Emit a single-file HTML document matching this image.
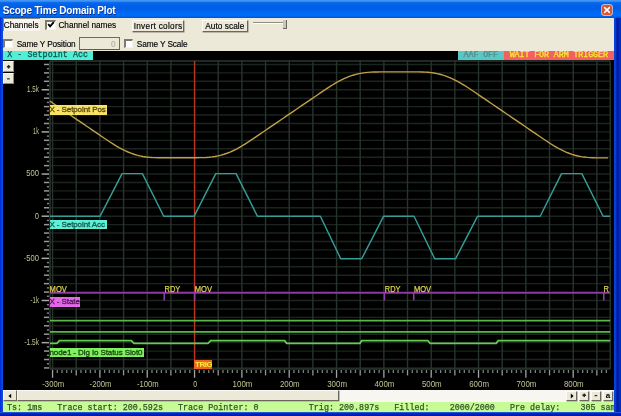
<!DOCTYPE html>
<html><head><meta charset="utf-8"><title>Scope Time Domain Plot</title>
<style>
html,body{margin:0;padding:0;}
body{width:621px;height:416px;overflow:hidden;background:#0a31c4;font-family:"Liberation Sans",sans-serif;position:relative;}
.abs{position:absolute;}
#wrap{position:absolute;left:0;top:0;width:621px;height:416px;will-change:transform;filter:blur(0.4px);}
#title{left:0;top:0;width:621px;height:18px;background:linear-gradient(#4c9ef4 0px,#3088f2 1.5px,#0a68ee 2.6px,#0060e8 5px,#005ee6 9px,#0068f2 12px,#006cf8 14.5px,#0068f4 16.2px,#0056e0 17px,#0050d8 18px);}
#title span{position:absolute;left:2.8px;top:5.3px;font-size:10px;font-weight:bold;color:#fff;letter-spacing:-0.2px;white-space:nowrap;text-shadow:0.5px 0.5px 0 #0a2a80;}
#close{left:602px;top:5px;width:10px;height:10px;border-radius:2px;background:#d8532f;box-shadow:0 0 0 0.7px #f4d8cc;}
#tool{left:3px;top:17.6px;width:611.2px;height:33.8px;background:#ece9d8;}
#tb span, #tb div{-webkit-text-stroke:0.15px currentColor;font-size:8.25px;color:#000;white-space:nowrap;}
.chk{position:absolute;width:9px;height:9px;background:#fff;border:1px solid;border-width:2px 1px 1px 2px;border-color:#7c7a6e #f6f4ec #f6f4ec #7c7a6e;box-sizing:border-box;}
.btn{position:absolute;height:12.5px;box-sizing:border-box;border:1px solid;border-color:#fbfaf6 #6a685e #6a685e #fbfaf6;background:#ece9d8;text-align:center;line-height:10.6px;box-shadow:0.6px 0.6px 0 #9a988c;}
#plot{left:3px;top:51px;width:611.2px;height:339.5px;background:#000;}
#sb{left:3px;top:390.4px;width:611.4px;height:11.3px;background:#f7f6f0;}
#status{left:3px;top:401.7px;width:611.4px;height:10px;background:#c6fb96;font-family:"Liberation Mono",monospace;font-size:9.4px;color:#2c5226;white-space:pre;overflow:hidden;line-height:12px;}
#status span{-webkit-text-stroke:0.25px currentColor;position:relative;left:-0.7px;display:inline-block;transform:scaleX(0.894);transform-origin:0 0;}
.sb2{border-color:#fbfaf6 #8e8c80 #8e8c80 #fbfaf6;box-shadow:none;}
.lab{-webkit-text-stroke:0.3px currentColor;position:absolute;font-size:8px;letter-spacing:-0.1px;line-height:9.6px;height:9.6px;white-space:nowrap;overflow:hidden;color:#203020;}
.mono{font-family:"Liberation Mono",monospace;}
</style></head><body><div id="wrap">
<div class="abs" style="left:0;top:0;width:3.2px;height:416px;background:linear-gradient(90deg,#0026d8 0,#0a4ce2 2px,#0a48cc 3.2px);"></div>
<div class="abs" style="left:613.6px;top:0;width:7.4px;height:416px;background:linear-gradient(90deg,#0a44dc 0,#0a3cd4 1.6px,#001ea8 2.8px,#0020a8 4.8px,#0030d0 5.8px,#002cc0 6.4px,#00249c 7.4px);"></div>
<div class="abs" style="left:0;top:411.6px;width:621px;height:4.4px;background:linear-gradient(#3a70e0 0,#0028d0 1.2px,#0020b8 2.4px,#001898 4.4px);"></div>
<div id="title" class="abs"><span>Scope Time Domain Plot</span>
<div id="close" class="abs"><svg width="10" height="10" viewBox="0 0 10 10" style="position:absolute;left:0;top:0"><path d="M2.6 2.6 L7.4 7.4 M7.4 2.6 L2.6 7.4" stroke="#fff" stroke-width="1.5" stroke-linecap="round"/></svg></div>
</div>
<div id="tool" class="abs"></div>
<div id="tb">
  <div class="abs" style="left:3px;top:18.2px;width:37.4px;height:13px;background:#f7f5ee;border-left:0.8px solid #8a897e;border-top:0.8px solid #8a897e;box-sizing:border-box;"></div>
  <span class="abs" style="left:3.7px;top:20.6px;">Channels</span>
  <div class="chk" style="left:45.2px;top:19.9px;width:10.4px;height:9.8px;"></div>
  <svg class="abs" style="left:46.6px;top:21.4px" width="8" height="8" viewBox="0 0 8 8"><path d="M1.2 3.2 L3.1 5.4 L6.8 1.2" stroke="#000" stroke-width="1.9" fill="none"/></svg>
  <span class="abs" style="left:58.4px;top:20.6px;">Channel names</span>
  <div class="btn" style="left:131.8px;top:19.5px;width:52.5px;height:12.6px;letter-spacing:0.3px;line-height:12.2px;">Invert colors</div>
  <div class="btn" style="left:201.7px;top:19.5px;width:46.2px;height:12.6px;line-height:12.2px;letter-spacing:0.05px;">Auto scale</div>
  <div class="abs" style="left:252.5px;top:22px;width:31px;height:1px;background:#8d8c82;"></div>
  <div class="abs" style="left:252.5px;top:23px;width:31px;height:0.8px;background:#fff;"></div>
  <div class="abs" style="left:283.4px;top:20.4px;width:3.8px;height:8.4px;background:#c8c6b8;border-right:1px solid #6a695f;border-bottom:1px solid #6a695f;box-sizing:border-box;"></div>
  <div class="chk" style="left:3.4px;top:38.8px;width:9.6px;height:9.6px;"></div>
  <span class="abs" style="left:16.7px;top:39.7px;letter-spacing:-0.12px;">Same Y Position</span>
  <div class="abs" style="left:78.5px;top:36.6px;width:41.8px;height:13.6px;background:#ece9d8;border:1px solid #6e6c62;border-bottom:1.4px solid #5c5a52;box-sizing:border-box;"></div>
  <span class="abs" style="left:111px;top:39.7px;color:#b4b1a2;">0</span>
  <div class="chk" style="left:123.6px;top:38.8px;width:9.6px;height:9.6px;"></div>
  <span class="abs" style="left:136.8px;top:39.7px;letter-spacing:-0.1px;">Same Y Scale</span>
</div>
<div id="plot" class="abs"></div>
<svg class="abs" style="left:0;top:0" width="621" height="416" viewBox="0 0 621 416" font-family="Liberation Sans, sans-serif">
 <g stroke="#27342c" stroke-width="1.4"><line stroke="#1a251f" x1="50.0" x2="610.2" y1="367.94" y2="367.94"/>
<line stroke="#1a251f" x1="50.0" x2="610.2" y1="359.51" y2="359.51"/>
<line stroke="#1a251f" x1="50.0" x2="610.2" y1="351.08" y2="351.08"/>
<line stroke="#1a251f" x1="50.0" x2="610.2" y1="342.65" y2="342.65"/>
<line stroke="#1a251f" x1="50.0" x2="610.2" y1="334.22" y2="334.22"/>
<line stroke="#1a251f" x1="50.0" x2="610.2" y1="325.79" y2="325.79"/>
<line stroke="#1a251f" x1="50.0" x2="610.2" y1="317.36" y2="317.36"/>
<line stroke="#1a251f" x1="50.0" x2="610.2" y1="308.93" y2="308.93"/>
<line stroke="#1a251f" x1="50.0" x2="610.2" y1="300.50" y2="300.50"/>
<line stroke="#1a251f" x1="50.0" x2="610.2" y1="292.07" y2="292.07"/>
<line stroke="#1a251f" x1="50.0" x2="610.2" y1="283.64" y2="283.64"/>
<line stroke="#1a251f" x1="50.0" x2="610.2" y1="275.21" y2="275.21"/>
<line stroke="#1a251f" x1="50.0" x2="610.2" y1="266.78" y2="266.78"/>
<line stroke="#1a251f" x1="50.0" x2="610.2" y1="258.35" y2="258.35"/>
<line stroke="#1a251f" x1="50.0" x2="610.2" y1="249.92" y2="249.92"/>
<line stroke="#1a251f" x1="50.0" x2="610.2" y1="241.49" y2="241.49"/>
<line stroke="#1a251f" x1="50.0" x2="610.2" y1="233.06" y2="233.06"/>
<line stroke="#1a251f" x1="50.0" x2="610.2" y1="224.63" y2="224.63"/>
<line stroke="#1a251f" x1="50.0" x2="610.2" y1="216.20" y2="216.20"/>
<line stroke="#1a251f" x1="50.0" x2="610.2" y1="207.77" y2="207.77"/>
<line stroke="#1a251f" x1="50.0" x2="610.2" y1="199.34" y2="199.34"/>
<line stroke="#1a251f" x1="50.0" x2="610.2" y1="190.91" y2="190.91"/>
<line stroke="#1a251f" x1="50.0" x2="610.2" y1="182.48" y2="182.48"/>
<line stroke="#1a251f" x1="50.0" x2="610.2" y1="174.05" y2="174.05"/>
<line stroke="#1a251f" x1="50.0" x2="610.2" y1="165.62" y2="165.62"/>
<line stroke="#1a251f" x1="50.0" x2="610.2" y1="157.19" y2="157.19"/>
<line stroke="#1a251f" x1="50.0" x2="610.2" y1="148.76" y2="148.76"/>
<line stroke="#1a251f" x1="50.0" x2="610.2" y1="140.33" y2="140.33"/>
<line stroke="#1a251f" x1="50.0" x2="610.2" y1="131.90" y2="131.90"/>
<line stroke="#1a251f" x1="50.0" x2="610.2" y1="123.47" y2="123.47"/>
<line stroke="#1a251f" x1="50.0" x2="610.2" y1="115.04" y2="115.04"/>
<line stroke="#1a251f" x1="50.0" x2="610.2" y1="106.61" y2="106.61"/>
<line stroke="#1a251f" x1="50.0" x2="610.2" y1="98.18" y2="98.18"/>
<line stroke="#1a251f" x1="50.0" x2="610.2" y1="89.75" y2="89.75"/>
<line stroke="#1a251f" x1="50.0" x2="610.2" y1="81.32" y2="81.32"/>
<line stroke="#1a251f" x1="50.0" x2="610.2" y1="72.89" y2="72.89"/>
<line stroke="#1a251f" x1="50.0" x2="610.2" y1="64.46" y2="64.46"/>
<line x1="52.56" x2="52.56" y1="61.0" y2="369.3"/>
<line x1="76.23" x2="76.23" y1="61.0" y2="369.3"/>
<line x1="99.89" x2="99.89" y1="61.0" y2="369.3"/>
<line x1="123.56" x2="123.56" y1="61.0" y2="369.3"/>
<line x1="147.22" x2="147.22" y1="61.0" y2="369.3"/>
<line x1="170.89" x2="170.89" y1="61.0" y2="369.3"/>
<line x1="194.55" x2="194.55" y1="61.0" y2="369.3"/>
<line x1="218.22" x2="218.22" y1="61.0" y2="369.3"/>
<line x1="241.88" x2="241.88" y1="61.0" y2="369.3"/>
<line x1="265.55" x2="265.55" y1="61.0" y2="369.3"/>
<line x1="289.21" x2="289.21" y1="61.0" y2="369.3"/>
<line x1="312.88" x2="312.88" y1="61.0" y2="369.3"/>
<line x1="336.54" x2="336.54" y1="61.0" y2="369.3"/>
<line x1="360.21" x2="360.21" y1="61.0" y2="369.3"/>
<line x1="383.87" x2="383.87" y1="61.0" y2="369.3"/>
<line x1="407.53" x2="407.53" y1="61.0" y2="369.3"/>
<line x1="431.20" x2="431.20" y1="61.0" y2="369.3"/>
<line x1="454.87" x2="454.87" y1="61.0" y2="369.3"/>
<line x1="478.53" x2="478.53" y1="61.0" y2="369.3"/>
<line x1="502.19" x2="502.19" y1="61.0" y2="369.3"/>
<line x1="525.86" x2="525.86" y1="61.0" y2="369.3"/>
<line x1="549.52" x2="549.52" y1="61.0" y2="369.3"/>
<line x1="573.19" x2="573.19" y1="61.0" y2="369.3"/>
<line x1="596.86" x2="596.86" y1="61.0" y2="369.3"/></g>
 <line x1="50.0" x2="50.0" y1="61.0" y2="369.3" stroke="#2a3830" stroke-width="1.5"/>
 <line x1="610.2" x2="610.2" y1="61.0" y2="369.3" stroke="#27342c" stroke-width="1.4"/>
 <path d="M50.0,61 H610.2 M50.0,369 H610.2" stroke="#2a382f" stroke-width="1.4" fill="none"/>
 <g stroke="#9a9a9a" stroke-width="1.5"><line stroke="#989898" x1="44.0" x2="49" y1="367.94" y2="367.94"/>
<line stroke="#808080" x1="46.9" x2="49" y1="363.73" y2="363.73"/>
<line stroke="#989898" x1="44.0" x2="49" y1="359.51" y2="359.51"/>
<line stroke="#808080" x1="46.9" x2="49" y1="355.29" y2="355.29"/>
<line stroke="#989898" x1="44.0" x2="49" y1="351.08" y2="351.08"/>
<line stroke="#808080" x1="46.9" x2="49" y1="346.87" y2="346.87"/>
<line stroke="#a8a8a8" x1="41.6" x2="49" y1="342.65" y2="342.65"/>
<line stroke="#808080" x1="46.9" x2="49" y1="338.44" y2="338.44"/>
<line stroke="#989898" x1="44.0" x2="49" y1="334.22" y2="334.22"/>
<line stroke="#808080" x1="46.9" x2="49" y1="330.00" y2="330.00"/>
<line stroke="#989898" x1="44.0" x2="49" y1="325.79" y2="325.79"/>
<line stroke="#808080" x1="46.9" x2="49" y1="321.57" y2="321.57"/>
<line stroke="#989898" x1="44.0" x2="49" y1="317.36" y2="317.36"/>
<line stroke="#808080" x1="46.9" x2="49" y1="313.14" y2="313.14"/>
<line stroke="#989898" x1="44.0" x2="49" y1="308.93" y2="308.93"/>
<line stroke="#808080" x1="46.9" x2="49" y1="304.71" y2="304.71"/>
<line stroke="#a8a8a8" x1="41.6" x2="49" y1="300.50" y2="300.50"/>
<line stroke="#808080" x1="46.9" x2="49" y1="296.28" y2="296.28"/>
<line stroke="#989898" x1="44.0" x2="49" y1="292.07" y2="292.07"/>
<line stroke="#808080" x1="46.9" x2="49" y1="287.86" y2="287.86"/>
<line stroke="#989898" x1="44.0" x2="49" y1="283.64" y2="283.64"/>
<line stroke="#808080" x1="46.9" x2="49" y1="279.42" y2="279.42"/>
<line stroke="#989898" x1="44.0" x2="49" y1="275.21" y2="275.21"/>
<line stroke="#808080" x1="46.9" x2="49" y1="271.00" y2="271.00"/>
<line stroke="#989898" x1="44.0" x2="49" y1="266.78" y2="266.78"/>
<line stroke="#808080" x1="46.9" x2="49" y1="262.56" y2="262.56"/>
<line stroke="#a8a8a8" x1="41.6" x2="49" y1="258.35" y2="258.35"/>
<line stroke="#808080" x1="46.9" x2="49" y1="254.13" y2="254.13"/>
<line stroke="#989898" x1="44.0" x2="49" y1="249.92" y2="249.92"/>
<line stroke="#808080" x1="46.9" x2="49" y1="245.70" y2="245.70"/>
<line stroke="#989898" x1="44.0" x2="49" y1="241.49" y2="241.49"/>
<line stroke="#808080" x1="46.9" x2="49" y1="237.27" y2="237.27"/>
<line stroke="#989898" x1="44.0" x2="49" y1="233.06" y2="233.06"/>
<line stroke="#808080" x1="46.9" x2="49" y1="228.84" y2="228.84"/>
<line stroke="#989898" x1="44.0" x2="49" y1="224.63" y2="224.63"/>
<line stroke="#808080" x1="46.9" x2="49" y1="220.41" y2="220.41"/>
<line stroke="#a8a8a8" x1="41.6" x2="49" y1="216.20" y2="216.20"/>
<line stroke="#808080" x1="46.9" x2="49" y1="211.98" y2="211.98"/>
<line stroke="#989898" x1="44.0" x2="49" y1="207.77" y2="207.77"/>
<line stroke="#808080" x1="46.9" x2="49" y1="203.55" y2="203.55"/>
<line stroke="#989898" x1="44.0" x2="49" y1="199.34" y2="199.34"/>
<line stroke="#808080" x1="46.9" x2="49" y1="195.12" y2="195.12"/>
<line stroke="#989898" x1="44.0" x2="49" y1="190.91" y2="190.91"/>
<line stroke="#808080" x1="46.9" x2="49" y1="186.69" y2="186.69"/>
<line stroke="#989898" x1="44.0" x2="49" y1="182.48" y2="182.48"/>
<line stroke="#808080" x1="46.9" x2="49" y1="178.26" y2="178.26"/>
<line stroke="#a8a8a8" x1="41.6" x2="49" y1="174.05" y2="174.05"/>
<line stroke="#808080" x1="46.9" x2="49" y1="169.83" y2="169.83"/>
<line stroke="#989898" x1="44.0" x2="49" y1="165.62" y2="165.62"/>
<line stroke="#808080" x1="46.9" x2="49" y1="161.40" y2="161.40"/>
<line stroke="#989898" x1="44.0" x2="49" y1="157.19" y2="157.19"/>
<line stroke="#808080" x1="46.9" x2="49" y1="152.97" y2="152.97"/>
<line stroke="#989898" x1="44.0" x2="49" y1="148.76" y2="148.76"/>
<line stroke="#808080" x1="46.9" x2="49" y1="144.54" y2="144.54"/>
<line stroke="#989898" x1="44.0" x2="49" y1="140.33" y2="140.33"/>
<line stroke="#808080" x1="46.9" x2="49" y1="136.12" y2="136.12"/>
<line stroke="#a8a8a8" x1="41.6" x2="49" y1="131.90" y2="131.90"/>
<line stroke="#808080" x1="46.9" x2="49" y1="127.68" y2="127.68"/>
<line stroke="#989898" x1="44.0" x2="49" y1="123.47" y2="123.47"/>
<line stroke="#808080" x1="46.9" x2="49" y1="119.25" y2="119.25"/>
<line stroke="#989898" x1="44.0" x2="49" y1="115.04" y2="115.04"/>
<line stroke="#808080" x1="46.9" x2="49" y1="110.82" y2="110.82"/>
<line stroke="#989898" x1="44.0" x2="49" y1="106.61" y2="106.61"/>
<line stroke="#808080" x1="46.9" x2="49" y1="102.39" y2="102.39"/>
<line stroke="#989898" x1="44.0" x2="49" y1="98.18" y2="98.18"/>
<line stroke="#808080" x1="46.9" x2="49" y1="93.96" y2="93.96"/>
<line stroke="#a8a8a8" x1="41.6" x2="49" y1="89.75" y2="89.75"/>
<line stroke="#808080" x1="46.9" x2="49" y1="85.53" y2="85.53"/>
<line stroke="#989898" x1="44.0" x2="49" y1="81.32" y2="81.32"/>
<line stroke="#808080" x1="46.9" x2="49" y1="77.10" y2="77.10"/>
<line stroke="#989898" x1="44.0" x2="49" y1="72.89" y2="72.89"/>
<line stroke="#808080" x1="46.9" x2="49" y1="68.67" y2="68.67"/>
<line stroke="#989898" x1="44.0" x2="49" y1="64.46" y2="64.46"/></g>
 <g stroke="#8c8c8c" stroke-width="1.3"><line stroke="#a2a2a2" x1="52.56" x2="52.56" y1="369.9" y2="377.8"/>
<line stroke="#7e7e7e" x1="57.29" x2="57.29" y1="369.9" y2="373.0"/>
<line stroke="#7e7e7e" x1="62.03" x2="62.03" y1="369.9" y2="373.0"/>
<line stroke="#7e7e7e" x1="66.76" x2="66.76" y1="369.9" y2="373.0"/>
<line stroke="#7e7e7e" x1="71.49" x2="71.49" y1="369.9" y2="373.0"/>
<line stroke="#949494" x1="76.23" x2="76.23" y1="369.9" y2="375.4"/>
<line stroke="#7e7e7e" x1="80.96" x2="80.96" y1="369.9" y2="373.0"/>
<line stroke="#7e7e7e" x1="85.69" x2="85.69" y1="369.9" y2="373.0"/>
<line stroke="#7e7e7e" x1="90.42" x2="90.42" y1="369.9" y2="373.0"/>
<line stroke="#7e7e7e" x1="95.16" x2="95.16" y1="369.9" y2="373.0"/>
<line stroke="#a2a2a2" x1="99.89" x2="99.89" y1="369.9" y2="377.8"/>
<line stroke="#7e7e7e" x1="104.62" x2="104.62" y1="369.9" y2="373.0"/>
<line stroke="#7e7e7e" x1="109.36" x2="109.36" y1="369.9" y2="373.0"/>
<line stroke="#7e7e7e" x1="114.09" x2="114.09" y1="369.9" y2="373.0"/>
<line stroke="#7e7e7e" x1="118.82" x2="118.82" y1="369.9" y2="373.0"/>
<line stroke="#949494" x1="123.56" x2="123.56" y1="369.9" y2="375.4"/>
<line stroke="#7e7e7e" x1="128.29" x2="128.29" y1="369.9" y2="373.0"/>
<line stroke="#7e7e7e" x1="133.02" x2="133.02" y1="369.9" y2="373.0"/>
<line stroke="#7e7e7e" x1="137.75" x2="137.75" y1="369.9" y2="373.0"/>
<line stroke="#7e7e7e" x1="142.49" x2="142.49" y1="369.9" y2="373.0"/>
<line stroke="#a2a2a2" x1="147.22" x2="147.22" y1="369.9" y2="377.8"/>
<line stroke="#7e7e7e" x1="151.95" x2="151.95" y1="369.9" y2="373.0"/>
<line stroke="#7e7e7e" x1="156.69" x2="156.69" y1="369.9" y2="373.0"/>
<line stroke="#7e7e7e" x1="161.42" x2="161.42" y1="369.9" y2="373.0"/>
<line stroke="#7e7e7e" x1="166.15" x2="166.15" y1="369.9" y2="373.0"/>
<line stroke="#949494" x1="170.89" x2="170.89" y1="369.9" y2="375.4"/>
<line stroke="#7e7e7e" x1="175.62" x2="175.62" y1="369.9" y2="373.0"/>
<line stroke="#7e7e7e" x1="180.35" x2="180.35" y1="369.9" y2="373.0"/>
<line stroke="#7e7e7e" x1="185.08" x2="185.08" y1="369.9" y2="373.0"/>
<line stroke="#7e7e7e" x1="189.82" x2="189.82" y1="369.9" y2="373.0"/>
<line stroke="#a2a2a2" x1="194.55" x2="194.55" y1="369.9" y2="377.8"/>
<line stroke="#7e7e7e" x1="199.28" x2="199.28" y1="369.9" y2="373.0"/>
<line stroke="#7e7e7e" x1="204.02" x2="204.02" y1="369.9" y2="373.0"/>
<line stroke="#7e7e7e" x1="208.75" x2="208.75" y1="369.9" y2="373.0"/>
<line stroke="#7e7e7e" x1="213.48" x2="213.48" y1="369.9" y2="373.0"/>
<line stroke="#949494" x1="218.22" x2="218.22" y1="369.9" y2="375.4"/>
<line stroke="#7e7e7e" x1="222.95" x2="222.95" y1="369.9" y2="373.0"/>
<line stroke="#7e7e7e" x1="227.68" x2="227.68" y1="369.9" y2="373.0"/>
<line stroke="#7e7e7e" x1="232.41" x2="232.41" y1="369.9" y2="373.0"/>
<line stroke="#7e7e7e" x1="237.15" x2="237.15" y1="369.9" y2="373.0"/>
<line stroke="#a2a2a2" x1="241.88" x2="241.88" y1="369.9" y2="377.8"/>
<line stroke="#7e7e7e" x1="246.61" x2="246.61" y1="369.9" y2="373.0"/>
<line stroke="#7e7e7e" x1="251.35" x2="251.35" y1="369.9" y2="373.0"/>
<line stroke="#7e7e7e" x1="256.08" x2="256.08" y1="369.9" y2="373.0"/>
<line stroke="#7e7e7e" x1="260.81" x2="260.81" y1="369.9" y2="373.0"/>
<line stroke="#949494" x1="265.55" x2="265.55" y1="369.9" y2="375.4"/>
<line stroke="#7e7e7e" x1="270.28" x2="270.28" y1="369.9" y2="373.0"/>
<line stroke="#7e7e7e" x1="275.01" x2="275.01" y1="369.9" y2="373.0"/>
<line stroke="#7e7e7e" x1="279.74" x2="279.74" y1="369.9" y2="373.0"/>
<line stroke="#7e7e7e" x1="284.48" x2="284.48" y1="369.9" y2="373.0"/>
<line stroke="#a2a2a2" x1="289.21" x2="289.21" y1="369.9" y2="377.8"/>
<line stroke="#7e7e7e" x1="293.94" x2="293.94" y1="369.9" y2="373.0"/>
<line stroke="#7e7e7e" x1="298.68" x2="298.68" y1="369.9" y2="373.0"/>
<line stroke="#7e7e7e" x1="303.41" x2="303.41" y1="369.9" y2="373.0"/>
<line stroke="#7e7e7e" x1="308.14" x2="308.14" y1="369.9" y2="373.0"/>
<line stroke="#949494" x1="312.88" x2="312.88" y1="369.9" y2="375.4"/>
<line stroke="#7e7e7e" x1="317.61" x2="317.61" y1="369.9" y2="373.0"/>
<line stroke="#7e7e7e" x1="322.34" x2="322.34" y1="369.9" y2="373.0"/>
<line stroke="#7e7e7e" x1="327.07" x2="327.07" y1="369.9" y2="373.0"/>
<line stroke="#7e7e7e" x1="331.81" x2="331.81" y1="369.9" y2="373.0"/>
<line stroke="#a2a2a2" x1="336.54" x2="336.54" y1="369.9" y2="377.8"/>
<line stroke="#7e7e7e" x1="341.27" x2="341.27" y1="369.9" y2="373.0"/>
<line stroke="#7e7e7e" x1="346.01" x2="346.01" y1="369.9" y2="373.0"/>
<line stroke="#7e7e7e" x1="350.74" x2="350.74" y1="369.9" y2="373.0"/>
<line stroke="#7e7e7e" x1="355.47" x2="355.47" y1="369.9" y2="373.0"/>
<line stroke="#949494" x1="360.21" x2="360.21" y1="369.9" y2="375.4"/>
<line stroke="#7e7e7e" x1="364.94" x2="364.94" y1="369.9" y2="373.0"/>
<line stroke="#7e7e7e" x1="369.67" x2="369.67" y1="369.9" y2="373.0"/>
<line stroke="#7e7e7e" x1="374.40" x2="374.40" y1="369.9" y2="373.0"/>
<line stroke="#7e7e7e" x1="379.14" x2="379.14" y1="369.9" y2="373.0"/>
<line stroke="#a2a2a2" x1="383.87" x2="383.87" y1="369.9" y2="377.8"/>
<line stroke="#7e7e7e" x1="388.60" x2="388.60" y1="369.9" y2="373.0"/>
<line stroke="#7e7e7e" x1="393.34" x2="393.34" y1="369.9" y2="373.0"/>
<line stroke="#7e7e7e" x1="398.07" x2="398.07" y1="369.9" y2="373.0"/>
<line stroke="#7e7e7e" x1="402.80" x2="402.80" y1="369.9" y2="373.0"/>
<line stroke="#949494" x1="407.53" x2="407.53" y1="369.9" y2="375.4"/>
<line stroke="#7e7e7e" x1="412.27" x2="412.27" y1="369.9" y2="373.0"/>
<line stroke="#7e7e7e" x1="417.00" x2="417.00" y1="369.9" y2="373.0"/>
<line stroke="#7e7e7e" x1="421.73" x2="421.73" y1="369.9" y2="373.0"/>
<line stroke="#7e7e7e" x1="426.47" x2="426.47" y1="369.9" y2="373.0"/>
<line stroke="#a2a2a2" x1="431.20" x2="431.20" y1="369.9" y2="377.8"/>
<line stroke="#7e7e7e" x1="435.93" x2="435.93" y1="369.9" y2="373.0"/>
<line stroke="#7e7e7e" x1="440.67" x2="440.67" y1="369.9" y2="373.0"/>
<line stroke="#7e7e7e" x1="445.40" x2="445.40" y1="369.9" y2="373.0"/>
<line stroke="#7e7e7e" x1="450.13" x2="450.13" y1="369.9" y2="373.0"/>
<line stroke="#949494" x1="454.87" x2="454.87" y1="369.9" y2="375.4"/>
<line stroke="#7e7e7e" x1="459.60" x2="459.60" y1="369.9" y2="373.0"/>
<line stroke="#7e7e7e" x1="464.33" x2="464.33" y1="369.9" y2="373.0"/>
<line stroke="#7e7e7e" x1="469.06" x2="469.06" y1="369.9" y2="373.0"/>
<line stroke="#7e7e7e" x1="473.80" x2="473.80" y1="369.9" y2="373.0"/>
<line stroke="#a2a2a2" x1="478.53" x2="478.53" y1="369.9" y2="377.8"/>
<line stroke="#7e7e7e" x1="483.26" x2="483.26" y1="369.9" y2="373.0"/>
<line stroke="#7e7e7e" x1="488.00" x2="488.00" y1="369.9" y2="373.0"/>
<line stroke="#7e7e7e" x1="492.73" x2="492.73" y1="369.9" y2="373.0"/>
<line stroke="#7e7e7e" x1="497.46" x2="497.46" y1="369.9" y2="373.0"/>
<line stroke="#949494" x1="502.19" x2="502.19" y1="369.9" y2="375.4"/>
<line stroke="#7e7e7e" x1="506.93" x2="506.93" y1="369.9" y2="373.0"/>
<line stroke="#7e7e7e" x1="511.66" x2="511.66" y1="369.9" y2="373.0"/>
<line stroke="#7e7e7e" x1="516.39" x2="516.39" y1="369.9" y2="373.0"/>
<line stroke="#7e7e7e" x1="521.13" x2="521.13" y1="369.9" y2="373.0"/>
<line stroke="#a2a2a2" x1="525.86" x2="525.86" y1="369.9" y2="377.8"/>
<line stroke="#7e7e7e" x1="530.59" x2="530.59" y1="369.9" y2="373.0"/>
<line stroke="#7e7e7e" x1="535.33" x2="535.33" y1="369.9" y2="373.0"/>
<line stroke="#7e7e7e" x1="540.06" x2="540.06" y1="369.9" y2="373.0"/>
<line stroke="#7e7e7e" x1="544.79" x2="544.79" y1="369.9" y2="373.0"/>
<line stroke="#949494" x1="549.52" x2="549.52" y1="369.9" y2="375.4"/>
<line stroke="#7e7e7e" x1="554.26" x2="554.26" y1="369.9" y2="373.0"/>
<line stroke="#7e7e7e" x1="558.99" x2="558.99" y1="369.9" y2="373.0"/>
<line stroke="#7e7e7e" x1="563.72" x2="563.72" y1="369.9" y2="373.0"/>
<line stroke="#7e7e7e" x1="568.46" x2="568.46" y1="369.9" y2="373.0"/>
<line stroke="#a2a2a2" x1="573.19" x2="573.19" y1="369.9" y2="377.8"/>
<line stroke="#7e7e7e" x1="577.92" x2="577.92" y1="369.9" y2="373.0"/>
<line stroke="#7e7e7e" x1="582.66" x2="582.66" y1="369.9" y2="373.0"/>
<line stroke="#7e7e7e" x1="587.39" x2="587.39" y1="369.9" y2="373.0"/>
<line stroke="#7e7e7e" x1="592.12" x2="592.12" y1="369.9" y2="373.0"/>
<line stroke="#949494" x1="596.86" x2="596.86" y1="369.9" y2="375.4"/>
<line stroke="#7e7e7e" x1="601.59" x2="601.59" y1="369.9" y2="373.0"/>
<line stroke="#7e7e7e" x1="606.32" x2="606.32" y1="369.9" y2="373.0"/></g>
 <g font-size="9.2" fill="#c4c392"><text x="27.1" y="92.2" textLength="11.8" lengthAdjust="spacingAndGlyphs">1.5k</text>
<text x="33.1" y="134.3" textLength="5.8" lengthAdjust="spacingAndGlyphs">1k</text>
<text x="26.2" y="176.4" textLength="12.7" lengthAdjust="spacingAndGlyphs">500</text>
<text x="34.7" y="218.6" textLength="4.2" lengthAdjust="spacingAndGlyphs">0</text>
<text x="23.7" y="260.7" textLength="15.2" lengthAdjust="spacingAndGlyphs">-500</text>
<text x="30.5" y="302.9" textLength="8.4" lengthAdjust="spacingAndGlyphs">-1k</text>
<text x="24.4" y="345.0" textLength="14.5" lengthAdjust="spacingAndGlyphs">-1.5k</text>
<text x="42.3" y="387.0" textLength="21.8" lengthAdjust="spacingAndGlyphs">-300m</text>
<text x="89.6" y="387.0" textLength="21.8" lengthAdjust="spacingAndGlyphs">-200m</text>
<text x="136.9" y="387.0" textLength="21.8" lengthAdjust="spacingAndGlyphs">-100m</text>
<text x="193.2" y="387.0" textLength="3.9" lengthAdjust="spacingAndGlyphs">0</text>
<text x="232.6" y="387.0" textLength="19.8" lengthAdjust="spacingAndGlyphs">100m</text>
<text x="279.9" y="387.0" textLength="19.8" lengthAdjust="spacingAndGlyphs">200m</text>
<text x="327.2" y="387.0" textLength="19.8" lengthAdjust="spacingAndGlyphs">300m</text>
<text x="374.6" y="387.0" textLength="19.8" lengthAdjust="spacingAndGlyphs">400m</text>
<text x="421.9" y="387.0" textLength="19.8" lengthAdjust="spacingAndGlyphs">500m</text>
<text x="469.2" y="387.0" textLength="19.8" lengthAdjust="spacingAndGlyphs">600m</text>
<text x="516.6" y="387.0" textLength="19.8" lengthAdjust="spacingAndGlyphs">700m</text>
<text x="563.9" y="387.0" textLength="19.8" lengthAdjust="spacingAndGlyphs">800m</text>
</g>
 <line x1="194.55" x2="194.55" y1="61.0" y2="361" stroke="#b83622" stroke-width="1.3"/>
 <path d="M50.0,292.9 L610.2,292.9" stroke="#8e38a2" stroke-width="1.8" fill="none"/>
 <g stroke="#9440ac" stroke-width="1.5"><line x1="164.2" x2="164.2" y1="292.9" y2="300.4"/><line x1="194.6" x2="194.6" y1="292.9" y2="300.4"/><line x1="384.4" x2="384.4" y1="292.9" y2="300.4"/><line x1="413.7" x2="413.7" y1="292.9" y2="300.4"/><line x1="603.8" x2="603.8" y1="292.9" y2="300.4"/></g>
 <g font-size="8.6" fill="#d8d04c" stroke="#d8d04c" stroke-width="0.25"><text x="49.6" y="291.6" textLength="17.2" lengthAdjust="spacingAndGlyphs">MOV</text><text x="164.6" y="291.6" textLength="15.7" lengthAdjust="spacingAndGlyphs">RDY</text><text x="194.8" y="291.6" textLength="17.2" lengthAdjust="spacingAndGlyphs">MOV</text><text x="384.8" y="291.6" textLength="15.7" lengthAdjust="spacingAndGlyphs">RDY</text><text x="413.9" y="291.6" textLength="17.2" lengthAdjust="spacingAndGlyphs">MOV</text><text x="603.4" y="291.6" textLength="5.4" lengthAdjust="spacingAndGlyphs">R</text></g>
 <path d="M50.0,320.7 L610.2,320.7 M50.0,331.8 L610.2,331.8" stroke="#58b848" stroke-width="1.7" fill="none"/>
 <path d="M50.0,343.3 L57.0,343.3 L59.3,340.6 L131.3,340.6 L134.0,343.3 L208.0,343.3 L210.8,340.6 L284.6,340.6 L286.7,343.3 L360.0,343.3 L361.7,340.6 L427.8,340.6 L430.2,343.3 L496.2,343.3 L498.2,340.6 L610.2,340.6" stroke="#66cc50" stroke-width="1.8" fill="none"/>
 <path d="M50.0,101.20 L53.0,103.24 L56.0,105.29 L59.0,107.34 L62.0,109.38 L65.0,111.43 L68.0,113.47 L71.0,115.52 L74.0,117.56 L77.0,119.61 L80.0,121.65 L83.0,123.70 L86.0,125.75 L89.0,127.79 L92.0,129.84 L95.0,131.88 L98.0,133.93 L101.0,135.97 L104.0,138.01 L107.0,140.01 L110.0,141.97 L113.0,143.93 L116.0,145.79 L119.0,147.55 L122.0,149.18 L125.0,150.66 L128.0,152.00 L131.0,153.19 L134.0,154.24 L137.0,155.14 L140.0,155.89 L143.0,156.49 L146.0,156.96 L149.0,157.31 L152.0,157.52 L155.0,157.63 L158.0,157.68 L161.0,157.70 L164.0,157.70 L167.0,157.70 L170.0,157.70 L173.0,157.70 L176.0,157.70 L179.0,157.70 L182.0,157.70 L185.0,157.70 L188.0,157.70 L191.0,157.70 L194.0,157.70 L197.0,157.70 L200.0,157.67 L203.0,157.60 L206.0,157.47 L209.0,157.25 L212.0,156.93 L215.0,156.48 L218.0,155.89 L221.0,155.16 L224.0,154.28 L227.0,153.25 L230.0,152.07 L233.0,150.75 L236.0,149.28 L239.0,147.67 L242.0,145.93 L245.0,144.09 L248.0,142.17 L251.0,140.19 L254.0,138.17 L257.0,136.13 L260.0,134.08 L263.0,132.04 L266.0,129.99 L269.0,127.95 L272.0,125.90 L275.0,123.85 L278.0,121.81 L281.0,119.76 L284.0,117.72 L287.0,115.67 L290.0,113.63 L293.0,111.58 L296.0,109.54 L299.0,107.49 L302.0,105.44 L305.0,103.40 L308.0,101.35 L311.0,99.31 L314.0,97.26 L317.0,95.22 L320.0,93.17 L323.0,91.13 L326.0,89.11 L329.0,87.13 L332.0,85.22 L335.0,83.40 L338.0,81.69 L341.0,80.10 L344.0,78.66 L347.0,77.36 L350.0,76.21 L353.0,75.21 L356.0,74.35 L359.0,73.64 L362.0,73.07 L365.0,72.64 L368.0,72.33 L371.0,72.12 L374.0,72.00 L377.0,71.93 L380.0,71.90 L383.0,71.90 L386.0,71.90 L389.0,71.90 L392.0,71.90 L395.0,71.90 L398.0,71.90 L401.0,71.90 L404.0,71.90 L407.0,71.90 L410.0,71.90 L413.0,71.90 L416.0,71.90 L419.0,71.92 L422.0,71.98 L425.0,72.10 L428.0,72.30 L431.0,72.60 L434.0,73.02 L437.0,73.58 L440.0,74.29 L443.0,75.15 L446.0,76.15 L449.0,77.29 L452.0,78.58 L455.0,80.02 L458.0,81.59 L461.0,83.30 L464.0,85.11 L467.0,87.01 L470.0,88.97 L473.0,90.98 L476.0,93.02 L479.0,95.06 L482.0,97.11 L485.0,99.15 L488.0,101.20 L491.0,103.24 L494.0,105.29 L497.0,107.34 L500.0,109.38 L503.0,111.43 L506.0,113.47 L509.0,115.52 L512.0,117.56 L515.0,119.61 L518.0,121.65 L521.0,123.70 L524.0,125.75 L527.0,127.79 L530.0,129.84 L533.0,131.88 L536.0,133.93 L539.0,135.97 L542.0,138.02 L545.0,140.04 L548.0,142.04 L551.0,143.97 L554.0,145.83 L557.0,147.58 L560.0,149.22 L563.0,150.72 L566.0,152.07 L569.0,153.27 L572.0,154.32 L575.0,155.23 L578.0,155.99 L581.0,156.60 L584.0,157.07 L587.0,157.41 L590.0,157.64 L593.0,157.78 L596.0,157.86 L599.0,157.89 L602.0,157.89 L605.0,157.89 L608.0,157.89" stroke="#c0a046" stroke-width="1.4" fill="none"/>
 <path d="M50.0,216.2 L100.1,216.2 L122.1,173.6 L142.4,173.6 L163.7,216.2 L194.2,216.2 L215.8,173.6 L236.1,173.6 L257.4,216.2 L320.4,216.2 L340.7,258.7 L361.7,258.7 L383.7,216.2 L414.0,216.2 L434.7,258.7 L455.6,258.7 L477.6,216.2 L540.2,216.2 L561.5,173.6 L581.8,173.6 L603.1,216.2 L610.2,216.2" stroke="#369c96" stroke-width="1.45" fill="none" stroke-linejoin="round"/>
</svg>
<!-- labels -->
<div class="lab mono" style="left:3px;top:51.3px;width:90.4px;height:8.7px;background:#50f0d8;color:#17584c;font-size:8.3px;padding-left:4.2px;box-sizing:border-box;line-height:8.6px;letter-spacing:0.08px;">X - Setpoint Acc</div>
<div class="lab mono" style="left:458px;top:51.3px;width:45.5px;height:8.6px;background:#58c8c6;color:#5a8a86;font-size:8.35px;text-align:center;line-height:8.6px;">AAF OFF</div>
<div class="lab mono" style="left:503.5px;top:51.3px;width:110.5px;height:8.6px;background:#f46060;color:#f8e830;font-size:8.35px;text-align:center;line-height:8.6px;">WAIT FOR ARM TRIGGER</div>
<div class="btn sb2" style="left:3.1px;top:61.3px;width:10.8px;height:10.6px;"></div>
<div class="btn sb2" style="left:3.1px;top:73.3px;width:10.8px;height:11.2px;"></div>
<svg class="abs" style="left:3px;top:61px" width="12" height="24" viewBox="0 0 12 24"><path d="M3.9 5.8 H7.3 M5.6 4.1 V7.5" stroke="#222" stroke-width="1.4" fill="none"/><path d="M4.1 17.8 H6.7" stroke="#333" stroke-width="1.3" fill="none"/></svg>
<div class="lab" style="left:49.5px;top:105px;width:57px;background:#f8e464;color:#5a4a10;">X - Setpoint Pos</div>
<div class="lab" style="left:49.5px;top:219.8px;width:57px;background:#60f0d8;color:#105a50;">X - Setpoint Acc</div>
<div class="lab" style="left:49.5px;top:297px;width:30.5px;background:#e468e8;color:#501858;">X - State</div>
<div class="lab" style="left:49.5px;top:347.8px;width:94.7px;background:#80f060;color:#184810;">node1 - Dig Io Status Slot0</div>
<div class="lab" style="left:194.1px;top:359.8px;width:18.4px;height:9.4px;line-height:9.6px;background:#f06422;color:#f8ec38;font-size:8.1px;font-weight:bold;letter-spacing:-0.55px;padding-left:1px;box-sizing:border-box;-webkit-text-stroke:0;">TRIG</div>
<!-- scrollbar -->
<div id="sb" class="abs">
 <div class="btn" style="left:0;top:0;width:13.6px;height:11px;"></div>
 <svg class="abs" style="left:4.2px;top:2.5px" width="6" height="6" viewBox="0 0 6 6"><path d="M4.2 0.8 L1.4 3 L4.2 5.2Z" fill="#000"/></svg>
 <div class="btn" style="left:13.8px;top:0;width:322.6px;height:11px;"></div>
 <div class="btn" style="left:563.4px;top:0.2px;width:11px;height:10.4px;"></div>
 <svg class="abs" style="left:566.4px;top:2.5px" width="6" height="6" viewBox="0 0 6 6"><path d="M1.8 0.6 L4.6 3 L1.8 5.4Z" fill="#000"/></svg>
 <div class="btn" style="left:576.3px;top:0.2px;width:10.2px;height:10.4px;"></div>
 <div class="btn" style="left:588px;top:0.2px;width:9.9px;height:10.4px;"></div>
 <svg class="abs" style="left:576px;top:0" width="24" height="11" viewBox="0 0 24 11"><path d="M3.4 5.2 H7 M5.2 3.4 V7" stroke="#222" stroke-width="1.4" fill="none"/><path d="M15.6 5.6 H18.2" stroke="#333" stroke-width="1.3" fill="none"/></svg>
 <div class="btn" style="left:599.8px;top:0.2px;width:10.5px;height:10.4px;font-size:8px;line-height:7.6px;font-weight:bold;">a</div>
</div>
<div id="status" class="abs"><span> Ts: 1ms   Trace start: 200.592s   Trace Pointer: 0          Trig: 200.897s   Filled:    2000/2000   Pre delay:    305 sam</span></div>
</div></body></html>
